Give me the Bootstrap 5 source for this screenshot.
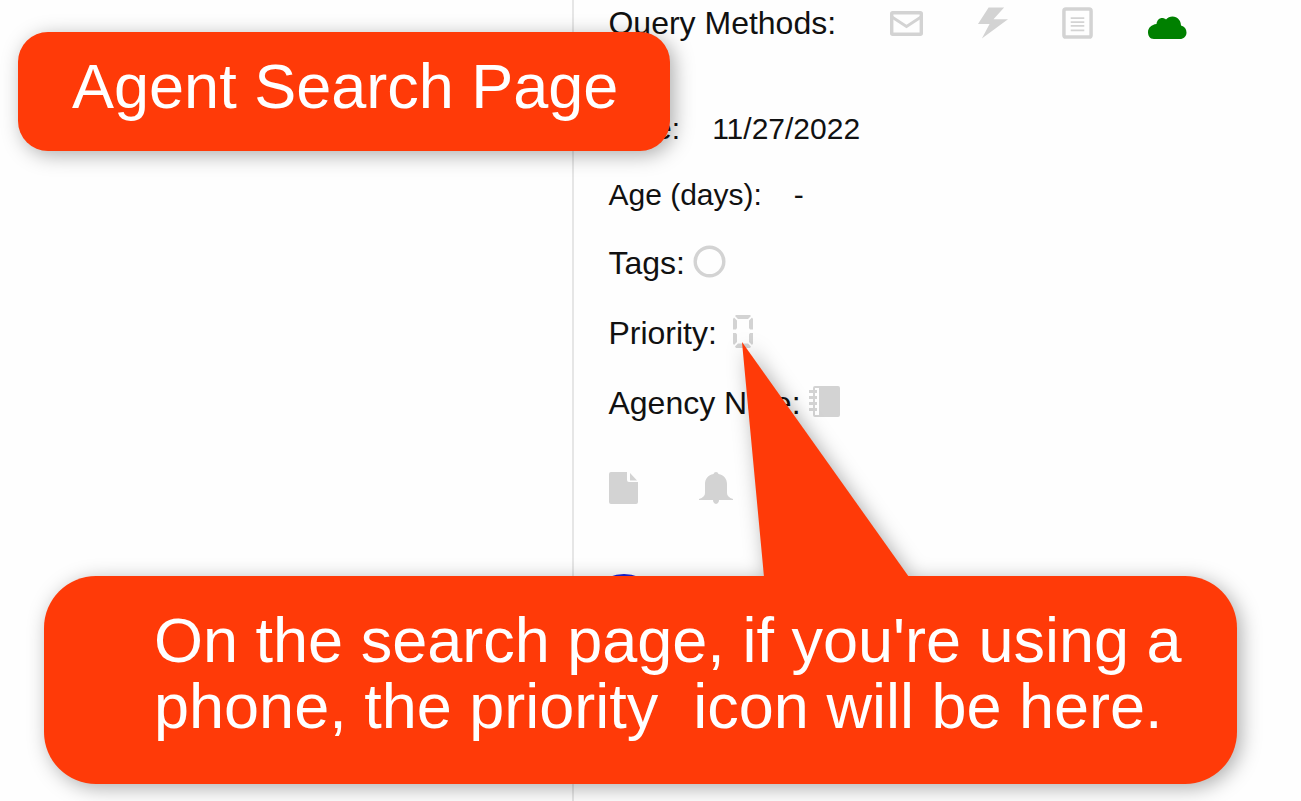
<!DOCTYPE html>
<html lang="en">
<head>
<meta charset="utf-8">
<meta name="viewport" content="width=device-width, initial-scale=1">
<title>Agent Search Page</title>
<link rel="stylesheet" href="https://cdn.jsdelivr.net/npm/bootstrap@5.3.0/dist/css/bootstrap.min.css">
<style>
  body { font-family: "Liberation Sans", Arial, sans-serif; background: #fefefe; }
  .stage { color: #111; }
  .side-pane { flex: 0 0 44%; }
  .detail-pane { padding-left: 34px; font-size: 32px; line-height: 46px; border-left: 2px solid #e6e6e6; }
  .detail-line { min-height: 70px; }
  .detail-date { min-height: 66px; font-size: 30px; }
  .methods { gap: 54px; }
  .after-methods { margin-bottom: 50px; }
  .actions { padding-top: 34px; gap: 60px; }
  .site-mark { margin-top: 67px; }
  .off { color: #d3d3d3; }
  .on { color: #008000; }
  .plain-btn { padding: 0; border: 0; background: none; line-height: 0; display: block; }
  .note-box { background: #ff3a08; color: #fff; font-size: 63px; line-height: 66px; position: absolute; filter: drop-shadow(4px 4px 10px rgba(0,0,0,.32)); }
  .note-title { left: 18px; top: 32px; padding: 21px 52px 32px 54px; border-radius: 30px; }
  .note-hint { left: 44px; right: 64px; top: 576px; padding: 31px 40px 45px 110px; border-radius: 52px; white-space: pre-wrap; }
  .note-tail { position: absolute; left: 698px; bottom: 100%; margin-bottom: -1px; }
</style>
</head>
<body>
<main class="stage position-relative d-flex min-vh-100 overflow-hidden">
  <div class="side-pane"></div>
  <section class="detail-pane flex-grow-1">
    <div class="methods after-methods d-flex align-items-center">
      <span>Query Methods:</span>
      <button class="plain-btn off" aria-label="Email"><svg width="33" height="25" viewBox="0 0 33 25" fill="none" stroke="currentColor" stroke-width="3.400"><rect x="1.700" y="1.700" width="29.600" height="21.600" rx="1"/><path d="M2 6l14.500 9.500L31 6" stroke-width="2.800"/></svg></button>
      <button class="plain-btn off" aria-label="Quick query"><svg width="31" height="33" viewBox="0 0 32 33" fill="currentColor"><path d="M12 0h16L17 12h15L5 32l8-15H1z"/></svg></button>
      <button class="plain-btn off" aria-label="Form"><svg width="31" height="33" viewBox="0 0 32 33" fill="none" stroke="currentColor"><rect x="2" y="1.500" width="28" height="29" rx="2" stroke-width="3.600"/><path d="M9 11h14M9 15h14M9 19h14M9 23.500h14" stroke-width="1.800"/></svg></button>
      <button class="plain-btn on" aria-label="Online"><svg width="40" height="34" viewBox="0 0 40 34" fill="currentColor"><path d="M7 33C2.500 33 1 29.500 1 26c0-4 3.500-7.500 8.500-8 .5-4 3-6 5.500-6 1.500 0 3 .5 4 1.500 1.500-2 4-3 6.500-3 5 0 8.500 4 8.500 9 3.500 1 5.500 3.500 5.500 7 0 4-3 6.500-6.500 6.500z"/></svg></button>
    </div>
    <div class="detail-date d-flex align-items-center"><span>Date:</span><span class="ms-4 ps-2">11/27/2022</span></div>
    <div class="detail-date d-flex align-items-center"><span>Age (days):</span><span class="ms-4 ps-2">-</span></div>
    <div class="detail-line d-flex align-items-center"><span>Tags:</span>
      <button class="plain-btn off ms-2 mb-1" aria-label="Tags"><svg width="33" height="33" viewBox="0 0 33 33" fill="none" stroke="currentColor" stroke-width="3.400"><circle cx="16.500" cy="16.500" r="14.300"/></svg></button>
    </div>
    <div class="detail-line d-flex align-items-center"><span>Priority:</span>
      <button class="plain-btn off ms-3 mb-1" aria-label="Priority"><svg width="20" height="33" viewBox="0 0 20 33" fill="currentColor"><path d="M3 0h14l1 1-3 3H5L2 1zM0 4l1-1.500L4 5.500V13l-1 1.500H0zM20 4l-1-1.500-3 3V13l1 1.500h3zM0 18h3l1 1.500V27l-3 3-1-1.500zM20 18h-3l-1 1.500V27l3 3 1-1.500zM5 28.500h10l3 3-1 1.500H3l-1-1.500z"/></svg></button>
    </div>
    <div class="detail-line d-flex align-items-center"><span>Agency Note:</span>
      <button class="plain-btn off ms-2 mb-1" aria-label="Agency note"><svg width="31" height="31" viewBox="0 0 31 31" fill="currentColor"><path fill-rule="evenodd" d="M6 0h23q2 0 2 2v27q0 2-2 2H6q-2 0-2-2V2q0-2 2-2zM6 2v27h4V2z"/><path d="M0 4h8v3H0zM0 10h8v3H0zM0 16h8v3H0zM0 22h8v3H0z"/></svg></button>
    </div>
    <div class="actions d-flex">
      <button class="plain-btn off" aria-label="File"><svg width="31" height="34" viewBox="0 0 31 34" fill="currentColor"><path d="M3 0h16v8q0 2 2 2h9v20q0 2-2 2H3q-2 0-2-2V2q0-2 2-2z"/><path d="M22 1l7 7.500h-7z"/></svg></button>
      <button class="plain-btn off" aria-label="Alerts"><svg width="34" height="34" viewBox="0 0 34 34" fill="currentColor"><path d="M17 0q2 0 2.500 2C25 3 28 7 28 12v9q0 4 6 6v1H20q0 3-3 4-3-1-3-4H0v-1q6-2 6-6v-9C6 7 9 3 14.500 2Q15 0 17 0z"/></svg></button>
    </div>
    <svg class="site-mark d-block" width="34" height="40" viewBox="0 0 34 40" fill="#1a22d8" aria-hidden="true"><path d="M1 4Q16-2 31 4v30H1z"/></svg>
  </section>

  <h1 class="note-box note-title m-0 fw-normal">Agent Search Page</h1>
  <p class="note-box note-hint m-0"><svg class="note-tail" width="168" height="236" viewBox="0 0 168 236" fill="#ff3a08" aria-hidden="true"><path d="M0 1L22 236H167z"/></svg>On the search page, if you're using a phone, the priority  icon will be here.</p>
</main>
<script src="https://cdn.jsdelivr.net/npm/bootstrap@5.3.0/dist/js/bootstrap.bundle.min.js"></script>
</body>
</html>
